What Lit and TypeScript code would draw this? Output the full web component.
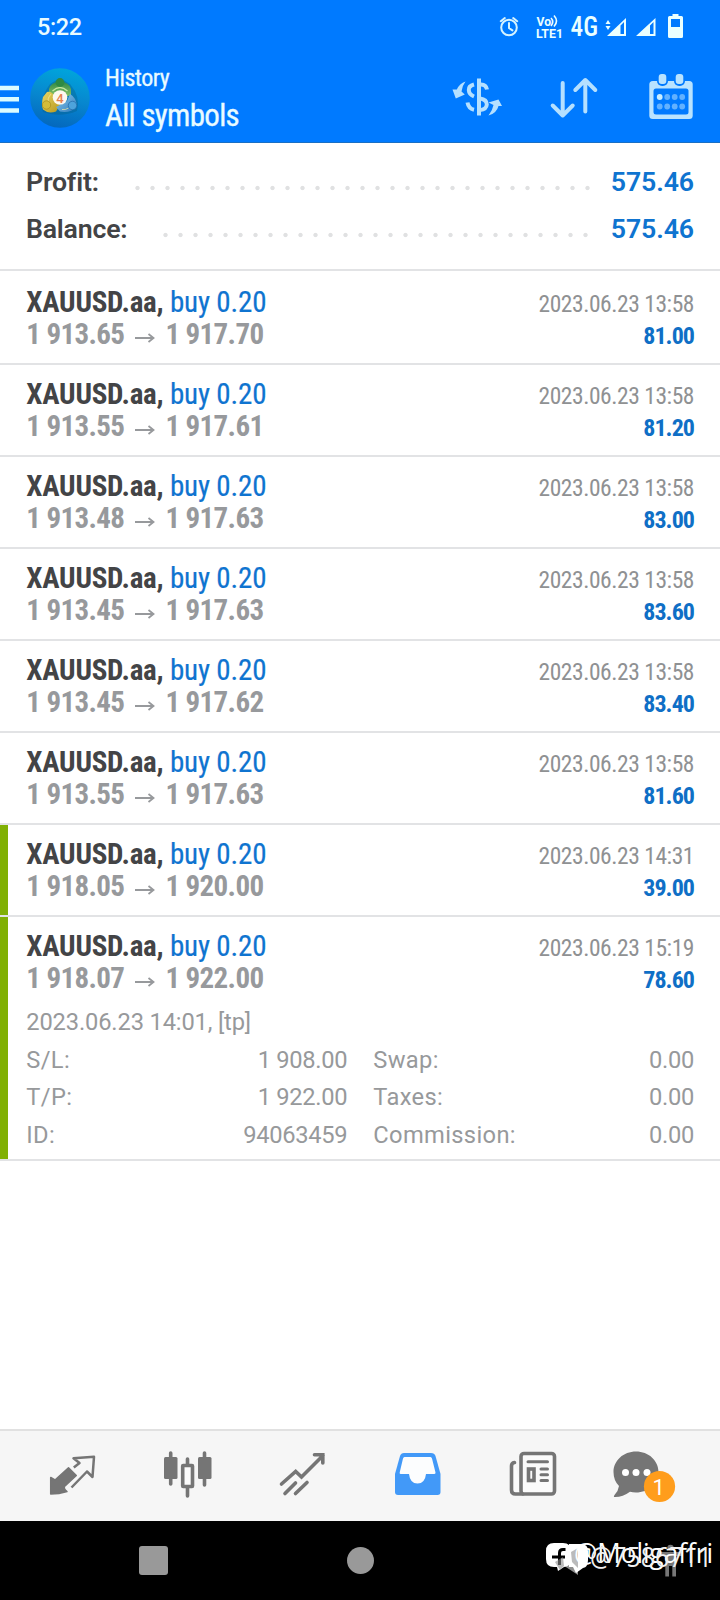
import { LitElement, html, css, svg } from "lit";

interface Deal {
  open: string;
  close: string;
  time: string;
  profit: string;
  marked?: boolean;
  details?: boolean;
}

const deals: Deal[] = [
  { open: "1 913.65", close: "1 917.70", time: "2023.06.23 13:58", profit: "81.00" },
  { open: "1 913.55", close: "1 917.61", time: "2023.06.23 13:58", profit: "81.20" },
  { open: "1 913.48", close: "1 917.63", time: "2023.06.23 13:58", profit: "83.00" },
  { open: "1 913.45", close: "1 917.63", time: "2023.06.23 13:58", profit: "83.60" },
  { open: "1 913.45", close: "1 917.62", time: "2023.06.23 13:58", profit: "83.40" },
  { open: "1 913.55", close: "1 917.63", time: "2023.06.23 13:58", profit: "81.60" },
  { open: "1 918.05", close: "1 920.00", time: "2023.06.23 14:31", profit: "39.00", marked: true },
  { open: "1 918.07", close: "1 922.00", time: "2023.06.23 15:19", profit: "78.60", marked: true, details: true },
];

class AppHeader extends LitElement {
  static styles = css`
    :host { display: block; height: 142px; background: #007aff; border-bottom: 1px solid #1a6fc4; color: #e9fbff; }
    .status { display: flex; height: 54px; align-items: center; justify-content: space-between; padding: 0 37px; box-sizing: border-box; }
    .clock { font: 500 23.5px/54px Roboto, sans-serif; letter-spacing: -0.4px; }
    .bar { display: flex; height: 88px; }
    .menu { flex: none; width: 30px; }
    .logo { flex: none; width: 60px; }
    .titles { flex: 1; padding: 9px 0 0 15px; font-family: "Roboto Condensed", Roboto, sans-serif; }
    .small { font-size: 24px; line-height: 30px; letter-spacing: -0.5px; -webkit-text-stroke: 0.3px #e9fbff; }
    .big { font-size: 31px; line-height: 40px; margin-top: 3px; letter-spacing: -0.7px; -webkit-text-stroke: 0.3px #e9fbff; }
    .actions { flex: none; width: 280px; }
    svg { display: block; }
  `;
  render() {
    return html`
      <div class="status">
        <span class="clock">5:22</span>
        <svg width="190" height="54" viewBox="493 0 190 54" fill="#eaffff">
          <g fill="none" stroke="#d5f3ff" stroke-width="2" stroke-linecap="round">
            <circle cx="509" cy="27.5" r="7.8" />
            <path d="M509 23v5l3.4 2.4M500.8 21.2l4-3.2M517.2 21.2l-4-3.2" />
          </g>
          <text x="536.5" y="26.200" font-family="Roboto" font-weight="700" font-size="12" textLength="14.500" lengthAdjust="spacingAndGlyphs">Vo</text>
          <path d="M551 18q3.400 3.600 0 8M554 15.500q5 5.600 0 11" fill="none" stroke="#eaffff" stroke-width="1.600" />
          <text x="536" y="37.500" font-family="Roboto" font-weight="700" font-size="13.500" textLength="27" lengthAdjust="spacingAndGlyphs">LTE1</text>
          <text x="570.5" y="36" font-family="Roboto Condensed" font-weight="500" font-size="27" textLength="27.500" lengthAdjust="spacingAndGlyphs">4G</text>
          <path d="M605.500 24l2.500-4 2.500 4zM605.500 26l2.500 4 2.500-4z" />
          <path fill-rule="evenodd" d="M607 36L626 18V36zM620.500 25.500V34H624V22z" />
          <path fill-rule="evenodd" d="M636 36L655.500 18V36zM650 25.500V34H653.500V22z" />
          <path fill-rule="evenodd" d="M672.500 16v-2h6v2h3q1.500 0 1.500 1.500V36.500q0 1.500-1.500 1.500h-12q-1.500 0-1.500-1.500V17.500q0-1.500 1.500-1.500zM671 19v8h9v-8z" />
        </svg>
      </div>
      <div class="bar">
        <svg class="menu" width="30" height="88" viewBox="0 54 30 88">
          <path d="M0 88H19M0 99.300H19M0 110.500H19" stroke="#dbfbff" stroke-width="4.500" />
        </svg>
        <svg class="logo" width="60" height="88" viewBox="30 54 60 88">
          <defs>
            <linearGradient id="sea" x1=".6" y1="0" x2=".4" y2="1">
              <stop offset="0" stop-color="#00a5dc" /><stop offset=".5" stop-color="#0787cf" /><stop offset="1" stop-color="#0467bd" />
            </linearGradient>
            <linearGradient id="leaf" x1="0" y1="0" x2="0" y2="1"><stop offset="0" stop-color="#2f8743" /><stop offset="1" stop-color="#8bc66a" /></linearGradient>
            <linearGradient id="gold" x1="0" y1="0" x2="1" y2="1"><stop offset="0" stop-color="#e6d765" /><stop offset="1" stop-color="#b9971c" /></linearGradient>
            <linearGradient id="sky" x1="0" y1="0" x2="1" y2="1"><stop offset="0" stop-color="#8dcdf0" /><stop offset="1" stop-color="#2d78bb" /></linearGradient>
          </defs>
          <circle cx="60" cy="98" r="29.800" fill="url(#sea)" />
          <path d="M43 112Q60 118 77 111Q81 97 70 84L60 78L50 84Q39 99 43 112Z" fill="#075f88" opacity=".4" />
          <path d="M49 95V89Q51 82 60 81.500Q69 82 71 89V95L65 97L60 92L54 97Z" fill="url(#leaf)" />
          <path d="M52.500 91Q60 84 67.500 91" fill="none" stroke="#c5e8a0" stroke-width="1.300" />
          <circle cx="60" cy="82.500" r="4.400" fill="#2e8a43" />
          <path d="M47 92Q52 91 55 97L60 105L56 111.500Q48 114 43 109.500Q41 104 43 97Z" fill="url(#gold)" />
          <path d="M70 94Q77 98 76.800 107Q70 113.500 60 111.500L56 107L62 104L67 101Z" fill="url(#sky)" />
          <path d="M51 94Q47 99 48.500 101M62 109.500Q66 110 68.500 108" fill="none" stroke="#f5eda0" stroke-width="1" opacity=".7" />
          <circle cx="46.500" cy="105" r="4.200" fill="#d4bc3a" stroke="#a68a1d" stroke-width=".7" />
          <circle cx="72.500" cy="105.500" r="4.200" fill="#4da3dc" stroke="#2268a8" stroke-width=".7" />
          <circle cx="60" cy="97.500" r="7.300" fill="#fdf8ef" />
          <text x="60" y="102.500" text-anchor="middle" font-family="Roboto" font-weight="500" font-size="13" fill="#e5804d">4</text>
        </svg>
        <div class="titles">
          <div class="small">History</div>
          <div class="big">All symbols</div>
        </div>
        <svg class="actions" width="280" height="88" viewBox="440 54 280 88">
          <g fill="none" stroke="#b5e0ff" stroke-width="4">
            <path d="M479 78.500V115.500" />
            <path d="M474 84.500Q468.500 86 468.800 90Q469 94.500 474 96.500" />
            <path d="M480 84.500Q486 84 487 89.500" />
            <path d="M480 98.500Q486.800 99.500 486.800 104.500Q486.500 109.500 480 110" />
            <path d="M467.500 102.500Q468.500 108.500 474 109.700" />
          </g>
          <g fill="#b5e0ff">
            <path d="M465.500 81.500Q459.500 83.500 456.800 89.500L452.500 89.500L455.800 98.500L464.800 94.500L461.500 91.500Q462 86 465.500 81.500Z" />
            <path d="M488.500 115.500Q496.500 113.500 498.500 106L502 106L498.500 99.500L488.500 102.500L493.500 105Q492.500 110.500 488.500 115.500Z" />
          </g>
          <path d="M562.700 83V115.500M552.700 105.500L562.700 115.500L572.700 105.500M585.300 111.500V80M575.300 90L585.300 80L595.300 90" fill="none" stroke="#b5e0ff" stroke-width="4" stroke-linecap="round" stroke-linejoin="round" />
          <rect x="649.300" y="81" width="43.400" height="38" rx="3.500" fill="#b9e3ff" />
          <rect x="653.500" y="88.500" width="35" height="26" rx="2.500" fill="#007aff" />
          <rect x="657" y="73" width="11" height="13" rx="5" fill="#007aff" /><rect x="674" y="73" width="11" height="13" rx="5" fill="#007aff" />
          <rect x="658.700" y="74" width="7.600" height="10" rx="3" fill="#b9e3ff" /><rect x="675.700" y="74" width="7.600" height="10" rx="3" fill="#b9e3ff" />
          ${[97, 106.500].map((y) => [659.700, 667.200, 674.700, 682.200].map((x) => svg`<circle cx=${x} cy=${y} r="2.900" fill=${x < 660 && y < 100 ? "#c9edff" : "#62b1ff"} />`))}
        </svg>
      </div>`;
  }
}
customElements.define("app-header", AppHeader);

class DealRow extends LitElement {
  static properties = { deal: { attribute: false } };
  declare deal: Deal;
  static styles = css`
    :host { display: block; border-bottom: 2px solid #e2e3e5; background: #fff; }
    .body { border-left: 8px solid transparent; padding: 13px 26px 0 18.3px; min-height: 90px; box-sizing: border-box; }
    .marked { border-left-color: #80b004; }
    .full { height: 242px; }
    .line { display: flex; justify-content: space-between; height: 32px; line-height: 32px; white-space: pre; font-family: "Roboto Condensed", Roboto, sans-serif; }
    .left { font-size: 29px; }
    .symbol { font-weight: 700; color: #434446; letter-spacing: -0.25px; }
    .side { color: #0f74d0; letter-spacing: -0.15px; -webkit-text-stroke: 0.2px #0f74d0; }
    .price { font-weight: 700; color: #97999c; display: flex; letter-spacing: -0.62px; }
    .arrow { width: 24px; margin: 0 8.5px 0 8.5px; display: flex; align-items: center; padding-top: 7px; box-sizing: border-box; }
    .time { font-size: 23.5px; line-height: 36px; color: #8f9193; letter-spacing: -0.44px; }
    .profit { font-size: 24px; line-height: 36px; font-weight: 700; color: #0f6fc6; letter-spacing: -0.95px; }
    .details { margin-top: 10px; font: 23.7px/37.5px Roboto, sans-serif; color: #97999b; }
    .note { letter-spacing: -0.15px; }
    .cols { display: grid; grid-template-columns: 321px 320.7px; column-gap: 26px; }
    .pair { display: flex; justify-content: space-between; }
    .label { letter-spacing: 0.35px; }
    .number { letter-spacing: -0.3px; }
  `;
  pair(label: string, value: string) {
    return html`<div class="pair"><span class="label">${label}</span><span class="number">${value}</span></div>`;
  }
  render() {
    const d = this.deal;
    return html`<div class="body ${d.marked ? "marked" : ""} ${d.details ? "full" : ""}">
      <div class="line">
        <span class="left"><span class="symbol">XAUUSD.aa,</span><span class="side"> buy 0.20</span></span>
        <span class="time">${d.time}</span>
      </div>
      <div class="line">
        <span class="left price"><span>${d.open}</span><span class="arrow"><svg width="24" height="12" viewBox="0 0 24 12"><path d="M2 6H20M15.500 2L20.500 6L15.500 10" fill="none" stroke="#97999c" stroke-width="1.800" /></svg></span><span>${d.close}</span></span>
        <span class="profit">${d.profit}</span>
      </div>
      ${d.details
        ? html`<div class="details">
            <div class="note">2023.06.23 14:01, [tp]</div>
            <div class="cols">
              ${this.pair("S/L:", "1 908.00")}${this.pair("Swap:", "0.00")}
              ${this.pair("T/P:", "1 922.00")}${this.pair("Taxes:", "0.00")}
              ${this.pair("ID:", "94063459")}${this.pair("Commission:", "0.00")}
            </div>
          </div>`
        : ""}
    </div>`;
  }
}
customElements.define("deal-row", DealRow);

class TabBar extends LitElement {
  static styles = css`
    :host { display: grid; grid-template-columns: repeat(6, 115px); justify-content: center; height: 92px; box-sizing: border-box; border-top: 2px solid #e1e1e1; background: #f6f6f6; }
    svg { display: block; }
  `;
  cell(i: number, content: unknown) {
    return html`<svg width="115" height="90" viewBox="${15 + i * 115} 1431 115 90">${content}</svg>`;
  }
  render() {
    return html`
      ${this.cell(0, svg`
        <path d="M50.700 1477.500L55 1480L68.500 1467.800L76.300 1475.500L64.500 1486.500Q63.500 1489 67 1491.500Q59 1494 50.700 1494Z" fill="#757575" stroke="#757575" stroke-width="1.500" stroke-linejoin="round" />
        <path d="M73.800 1467.500L79.500 1463L73.500 1458.200L94 1456.800L92.500 1477L87 1471.500L71.500 1487.500" fill="none" stroke="#757575" stroke-width="2.500" stroke-linejoin="round" />`)}
      ${this.cell(1, svg`
        <path d="M170.700 1453V1484M204.500 1453V1485M187.500 1459V1464M187.500 1488V1496" stroke="#757575" stroke-width="3.600" stroke-linecap="round" />
        <rect x="164" y="1457" width="13.500" height="22" rx="1.500" fill="#757575" /><rect x="198" y="1457" width="13.500" height="22" rx="1.500" fill="#757575" />
        <rect x="182.700" y="1465.500" width="9.800" height="21" rx=".5" fill="#fbfbfb" stroke="#757575" stroke-width="3.600" />`)}
      ${this.cell(2, svg`<path d="M281.500 1484L295.700 1471.500L301.500 1477L323 1455.500M314.500 1454.700H322.800V1463M285 1493.500L295.500 1483M295.500 1493.500L307 1482.500" fill="none" stroke="#757575" stroke-width="3.600" stroke-linecap="round" />`)}
      ${this.cell(3, svg`
        <path d="M404 1453H431Q434.500 1453 435.500 1456L440.500 1474V1492Q440.500 1495 437.500 1495H398Q395 1495 395 1492V1474L400 1456Q401 1453 404 1453Z" fill="#4299f8" />
        <path d="M404.500 1457H430.500Q431.500 1457 432 1458.500L435.500 1472.500Q435.700 1474 434 1474H426Q425 1483.500 417.500 1483.500Q410 1483.500 409 1474H401Q399.300 1474 399.700 1472.500L403 1458.500Q403.400 1457 404.500 1457Z" fill="#fcfdfe" />`)}
      ${this.cell(4, svg`
        <g fill="none" stroke="#757575" stroke-width="3.600" stroke-linecap="round">
          <path d="M514.500 1462.500Q511.500 1463 511.500 1466V1490Q511.500 1494 515.500 1494H523" fill="#fbfbfb" />
          <rect x="521" y="1453.500" width="33.500" height="40.500" rx="3" fill="#fbfbfb" />
          <path d="M528 1461.700H547.500M541 1469H547.500M541 1474.700H547.500M541 1480.500H547.500" stroke-width="3" />
          <rect x="528.500" y="1469" width="5.500" height="11.500" stroke-width="3.600" />
        </g>`)}
      ${this.cell(5, svg`
        <path d="M636 1451.500C648.500 1451.500 658.500 1460.500 658.500 1472S648.500 1492.500 636 1492.500Q632.500 1492.500 630 1491.800Q623 1497 615 1497Q613 1497 614.500 1495Q618.500 1490.500 619 1486Q613.500 1480.500 613.500 1472C613.500 1460.500 623.500 1451.500 636 1451.500Z" fill="#757575" />
        <g fill="#fff"><circle cx="625.500" cy="1472.500" r="3.500" /><circle cx="636" cy="1472.500" r="3.500" /><circle cx="647" cy="1472.500" r="3.500" /></g>
        <circle cx="659.500" cy="1486.500" r="15.600" fill="#ff9d1c" />
        <text x="658.800" y="1494.700" text-anchor="middle" font-family="Roboto" font-size="22" fill="#fff">1</text>`)}
    `;
  }
}
customElements.define("tab-bar", TabBar);

class SystemNav extends LitElement {
  static styles = css`
    :host { display: block; position: relative; height: 79px; background: #000; overflow: hidden; }
    .keys { display: flex; height: 79px; align-items: center; padding-left: 139px; box-sizing: border-box; }
    .square { width: 29px; height: 29px; border-radius: 3px; background: #999; }
    .circle { width: 27px; height: 27px; border-radius: 50%; background: #999; margin-left: 179px; }
    .rest { margin-left: 171px; }
    .mark { position: absolute; right: 0; top: 0; }
  `;
  render() {
    return html`
      <div class="keys">
        <div class="square"></div>
        <div class="circle"></div>
        <svg class="rest" width="140" height="79" viewBox="545 1521 140 79">
          <path d="M556 1560.500L578 1548V1575Z" fill="#8d8d8d" />
          <g fill="#777"><circle cx="670.500" cy="1548" r="3.200" /><path d="M658 1552H683V1556H676V1576.500H672.300V1566H669V1576.500H665.300V1556H658Z" /></g>
        </svg>
      </div>
      <svg class="mark" width="190" height="79" viewBox="530 1521 190 79">
        <path d="M569 1544H581Q588 1544 588 1551V1560Q588 1567 583 1568L576 1573L573 1567H569Z" fill="#fff" />
        <path d="M554 1543H563Q571 1543 571 1551V1559Q571 1566 564 1567L558 1571L557 1567H554Q546 1567 546 1559V1551Q546 1543 554 1543Z" fill="#fff" />
        <path d="M565.500 1549.500H563Q559.500 1549.500 559.500 1553V1565M552 1557H565" fill="none" stroke="#000" stroke-width="3" />
        <path d="M555 1562L563 1557L564 1566L560 1570ZM571 1552L578 1548V1568L572 1562Z" fill="#8d8d8d" opacity=".6" />
        <text x="574" y="1563" font-family="Open Sans, Noto Sans" font-weight="400" font-size="27" fill="#fff" textLength="139" lengthAdjust="spacingAndGlyphs">@Moligaffri</text>
        <text x="590" y="1566.500" font-family="Open Sans, Noto Sans" font-weight="400" font-size="27" fill="#f0f0f0" textLength="122" lengthAdjust="spacingAndGlyphs">@7586711</text>
      </svg>`;
  }
}
customElements.define("system-nav", SystemNav);

class AppRoot extends LitElement {
  static styles = css`
    :host { display: flex; flex-direction: column; width: 720px; height: 1600px; background: #fff; overflow: hidden; font-family: Roboto, sans-serif; }
    .summary { box-sizing: border-box; height: 128px; padding: 16px 26px 0; border-bottom: 2px solid #e2e3e5; margin-bottom: 2px; }
    .total { display: flex; height: 47px; line-height: 47px; font-weight: 600; font-size: 26.7px; color: #434446; letter-spacing: -0.2px; }
    .name { width: 104px; }
    .name.wide { width: 132px; }
    .dots { flex: none; width: 465px; background: radial-gradient(circle at 7.5px 29px, #e0e1e2 1.7px, transparent 2.6px) 0 0 / 15px 47px repeat-x; }
    .wide + .dots { width: 435px; }
    .value { flex: 1; text-align: right; color: #0f74d0; letter-spacing: -0.1px; }
    .list { flex: 1; }
    .head { flex: none; }
  `;
  render() {
    return html`
      <app-header class="head"></app-header>
      <section class="summary">
        <div class="total"><span class="name">Profit:</span><span class="dots"></span><span class="value">575.46</span></div>
        <div class="total"><span class="name wide">Balance:</span><span class="dots"></span><span class="value">575.46</span></div>
      </section>
      <main class="list">${deals.map((d) => html`<deal-row .deal=${d}></deal-row>`)}</main>
      <tab-bar class="head"></tab-bar>
      <system-nav class="head"></system-nav>`;
  }
}
customElements.define("app-root", AppRoot);
